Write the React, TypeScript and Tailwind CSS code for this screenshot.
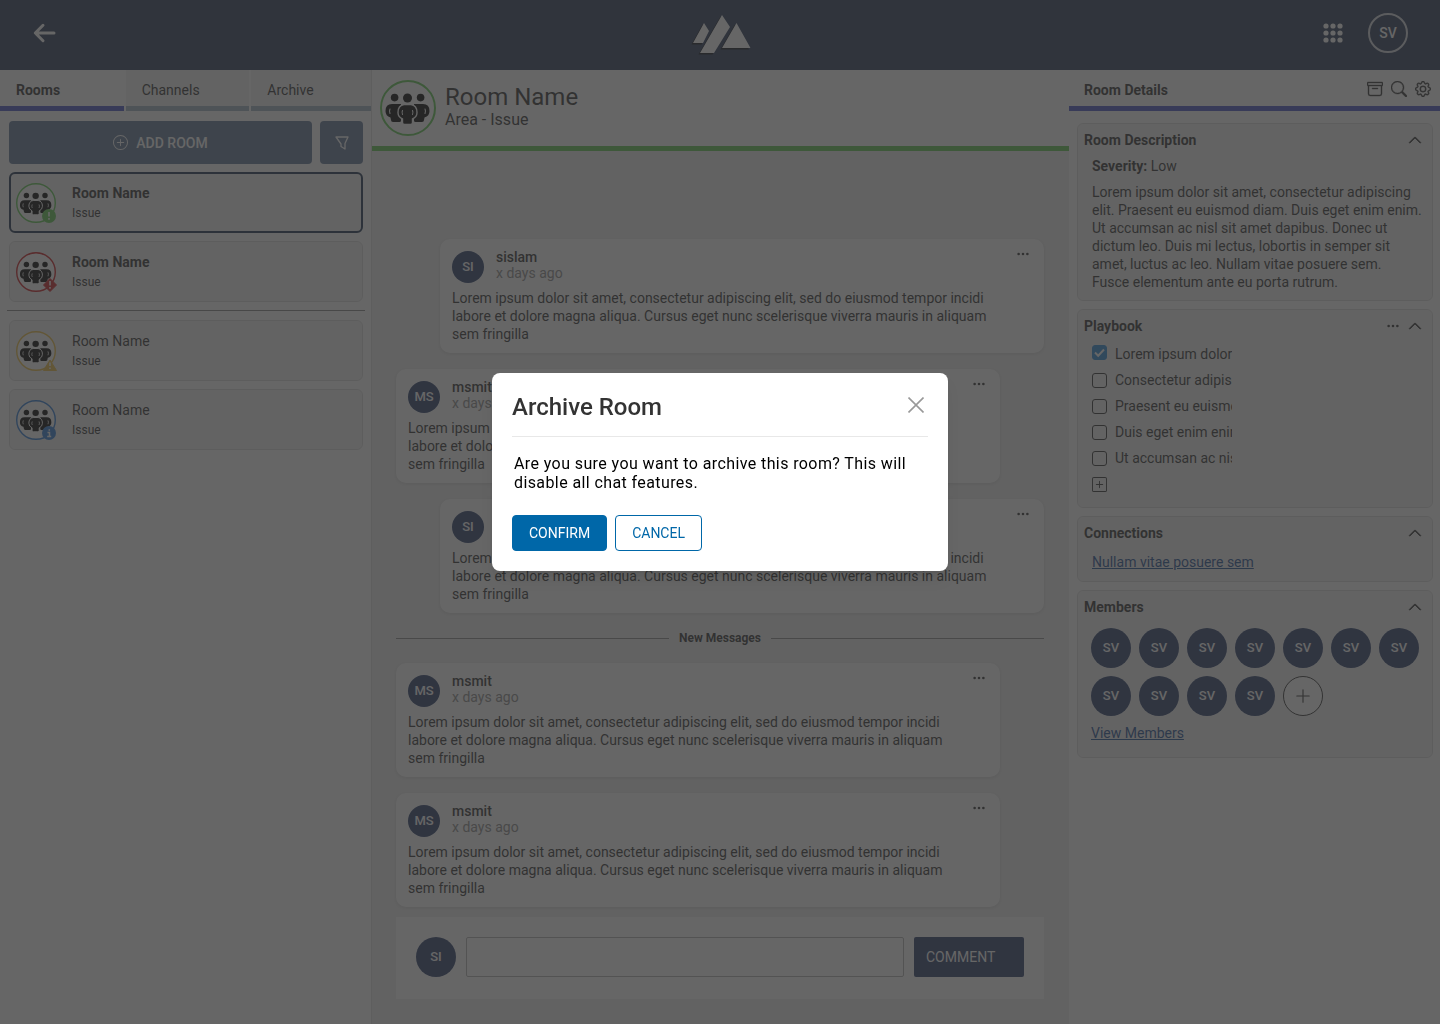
import type { ReactNode } from 'react';
import {
  BsArchive,
  BsChevronUp,
  BsGear,
  BsPlusCircle,
  BsPlusLg,
  BsPlusSquare,
  BsSearch,
  BsThreeDots,
} from 'react-icons/bs';
import clsx from 'clsx';

type Severity = 'low' | 'critical' | 'warning' | 'info';

const severityColor: Record<Severity, string> = {
  low: 'text-[#5fc852]',
  critical: 'text-[#cc1c20]',
  warning: 'text-[#eebf44]',
  info: 'text-[#2f7dd8]',
};

const rooms: { id: number; severity: Severity; unread: boolean; selected: boolean }[] = [
  { id: 1, severity: 'low', unread: true, selected: true },
  { id: 2, severity: 'critical', unread: true, selected: false },
  { id: 3, severity: 'warning', unread: false, selected: false },
  { id: 4, severity: 'info', unread: false, selected: false },
];

const messages = [
  { id: 1, initials: 'SI', user: 'sislam', own: true },
  { id: 2, initials: 'MS', user: 'msmit', own: false },
  { id: 3, initials: 'SI', user: 'sislam', own: true },
];

const newMessages = [
  { id: 4, initials: 'MS', user: 'msmit', own: false },
  { id: 5, initials: 'MS', user: 'msmit', own: false },
];

const messageText =
  'Lorem ipsum dolor sit amet, consectetur adipiscing elit, sed do eiusmod tempor incidi labore et dolore magna aliqua. Cursus eget nunc scelerisque viverra mauris in aliquam sem fringilla';

const playbook = [
  { id: 1, label: 'Lorem ipsum dolor', done: true },
  { id: 2, label: 'Consectetur adipiscing', done: false },
  { id: 3, label: 'Praesent eu euismod', done: false },
  { id: 4, label: 'Duis eget enim enim', done: false },
  { id: 5, label: 'Ut accumsan ac nisl', done: false },
];

const members = Array.from({ length: 11 }, (_, i) => i);

function PeopleIcon({ className }: { className?: string }) {
  return (
    <svg viewBox="0 0 56 56" className={className} aria-hidden="true">
      <circle cx="28" cy="28" r="27" fill="white" stroke="currentColor" strokeWidth="2" />
      <g fill="black">
        <circle cx="14.6" cy="17.6" r="3.8" />
        <circle cx="40.6" cy="17.6" r="3.8" />
        <path d="M12 24h9v16.500q0 1.500-1.500 1.500h-6.500q-2 0-2-2l-.5-2.500q-5-1.500-5-6.500 0-7 6.500-7z" />
        <path d="M43 24h-9v16.500q0 1.500 1.500 1.500h6.500q2 0 2-2l.5-2.500q5-1.500 5-6.500 0-7-6.500-7z" />
        <path
          d="M24 24.500h7q6 1 6 8 0 4.500-4.500 6.500v3.500q0 2-2 2h-6q-2 0-2-2V39Q18 37 18 32.500 18 25.500 24 24.500z"
          stroke="white"
          strokeWidth="1.4"
        />
        <circle cx="27.5" cy="18" r="4.500" />
      </g>
      <g fill="none" stroke="white" strokeWidth="1.1" strokeLinecap="round">
        <path d="M10 29q-1 2 0 4.500M45 29q1 2 0 4.500M22.500 30.500q-1 2 0 4M32.500 30.500q1 2 0 4" />
      </g>
    </svg>
  );
}

function SeverityBadge({ severity }: { severity: Severity }) {
  return (
    <svg
      viewBox="0 0 16 16"
      className={clsx('absolute -right-0.5 -bottom-px size-4', severityColor[severity])}
      aria-hidden="true"
    >
      {severity === 'low' && <circle cx="7" cy="8" r="7" fill="currentColor" />}
      {severity === 'info' && <circle cx="7" cy="8" r="7" fill="currentColor" />}
      {severity === 'critical' && (
        <path d="M8 1.500 14.500 8 8 14.500 1.500 8z" fill="currentColor" stroke="currentColor" strokeLinejoin="round" />
      )}
      {severity === 'warning' && (
        <path d="M8 4 14.500 14.500h-13z" fill="currentColor" stroke="currentColor" strokeLinejoin="round" />
      )}
      {severity === 'info' ? (
        <path d="M7.300 4.200v1.600M5.500 7.400h2V11.400M5.200 11.600h4" stroke="white" strokeWidth="1.500" fill="none" />
      ) : (
        <path
          d={severity === 'low' ? 'M7 4v4.500M7 10v1.800' : severity === 'critical' ? 'M8 4v4.500M8 10v1.800' : 'M8 6.500v3.500M8 11.500v1.600'}
          stroke="white"
          strokeWidth="1.600"
        />
      )}
    </svg>
  );
}

function Avatar({ children, size = 'md' }: { children: ReactNode; size?: 'sm' | 'md' }) {
  return (
    <span
      className={clsx(
        'flex shrink-0 items-center justify-center rounded-full bg-[#283c6a] text-[13px] font-medium text-white',
        size === 'sm' ? 'size-8' : 'size-10'
      )}
    >
      {children}
    </span>
  );
}

function Header() {
  return (
    <header className="grid h-[70px] grid-cols-3 items-center bg-[#283858] px-8 pb-1 text-white">
      <button type="button" aria-label="Back" className="justify-self-start">
        <svg viewBox="0 0 24 24" className="size-6" fill="none" stroke="currentColor" strokeWidth="3" strokeLinecap="round" strokeLinejoin="round">
          <path d="M22 12H3.500M11 4.300 3.300 12l7.700 7.700" />
        </svg>
      </button>
      <svg viewBox="0 0 64 44" className="h-11 w-16 justify-self-center" aria-hidden="true">
        <g fill="black" opacity="0.7" transform="translate(-1.500 1.500)">
          <path d="M16 12l5 8-6 12H5zM34 4l8 12-16 26H12zM48.500 12l14 25H34z" />
        </g>
        <g fill="white">
          <path d="M16 12l5 8-6 12H5zM34 4l8 12-16 26H12zM48.500 12l14 25H34z" />
        </g>
      </svg>
      <div className="flex items-center gap-[25px] justify-self-end">
        <button type="button" aria-label="Apps">
          <svg viewBox="0 0 20 20" className="size-5" fill="currentColor">
            {[3, 10, 17].map((y) => [3, 10, 17].map((x) => <circle key={`${x}-${y}`} cx={x} cy={y} r="2.600" />))}
          </svg>
        </button>
        <button type="button" className="flex size-10 items-center justify-center rounded-full border-2 border-white/80 text-sm font-medium">
          SV
        </button>
      </div>
    </header>
  );
}

function RoomCard({ room }: { room: (typeof rooms)[number] }) {
  return (
    <button
      type="button"
      className={clsx(
        'flex h-[61px] w-full items-center gap-4 rounded-md bg-[#f4f4f4] text-left',
        room.selected ? 'border-2 border-[#1c3350] pl-[5px]' : 'border border-[#dcdcdc] pl-1.5'
      )}
    >
      <span className="relative size-10 shrink-0">
        <PeopleIcon className={clsx('size-10', severityColor[room.severity])} />
        <SeverityBadge severity={room.severity} />
      </span>
      <span className="flex flex-col">
        <span className={clsx('text-sm leading-5', room.unread && 'font-bold')}>Room Name</span>
        <span className="text-xs leading-5">Issue</span>
      </span>
    </button>
  );
}

function RoomList() {
  return (
    <aside className="w-[372px] shrink-0 border-r border-[#e0e0e0] bg-white">
      <nav className="flex h-[41px] gap-0.5 text-sm">
        <a href="#rooms" className="w-1/3 shrink-0 border-b-5 border-[#4a55c8] bg-white px-4 leading-10 font-bold">
          Rooms
        </a>
        <a href="#channels" className="w-1/3 shrink-0 border-b-5 border-[#a0b2c2] bg-[#f2f2f2] px-4 leading-10">
          Channels
        </a>
        <a href="#archive" className="flex-1 border-b-5 border-[#a0b2c2] bg-[#f2f2f2] px-4 leading-10">
          Archive
        </a>
      </nav>
      <div className="flex flex-col gap-2 pt-2.5 pr-2 pl-[9px]">
        <div className="flex h-[43px] gap-2 text-white">
          <button type="button" className="flex flex-1 items-center justify-center gap-2 rounded-sm bg-[#607898] text-sm font-medium">
            <BsPlusCircle className="size-[15px]" />
            ADD ROOM
          </button>
          <button type="button" aria-label="Filter rooms" className="flex w-[43px] items-center justify-center rounded-sm bg-[#607898]">
            <svg viewBox="0 0 14 14" className="size-3.5" fill="none" stroke="currentColor" strokeLinejoin="round" strokeWidth="1.300">
              <path d="M1 1h12L10 7.500V13L6 10.500V8z" />
            </svg>
          </button>
        </div>
        {rooms.slice(0, 2).map((room) => (
          <RoomCard key={room.id} room={room} />
        ))}
        <hr className="-mx-0.5 mb-px border-[#888]" />
        {rooms.slice(2).map((room) => (
          <RoomCard key={room.id} room={room} />
        ))}
      </div>
    </aside>
  );
}

function Message({ message }: { message: (typeof messages)[number] }) {
  return (
    <article
      className={clsx(
        'rounded-[10px] bg-white px-3 pt-3 pb-2.5 text-sm shadow-[0_1px_4px_rgba(0,0,0,0.12)]',
        message.own ? 'ml-11' : 'mr-11'
      )}
    >
      <div className="flex items-start gap-3">
        <Avatar size="sm">{message.initials}</Avatar>
        <div className="flex-1 leading-4">
          <p className="-mt-0.5 font-medium">{message.user}</p>
          <p className="text-[#8c8c8c]">x days ago</p>
        </div>
        <button type="button" aria-label="Message options" className="-mt-1 mr-0.5">
          <BsThreeDots className="size-3.5" />
        </button>
      </div>
      <p className="mt-1.5 pr-9 leading-[18px]">{messageText}</p>
    </article>
  );
}

function Chat() {
  return (
    <main className="flex min-w-0 flex-1 flex-col bg-[#f0f0f0]">
      <div className="flex h-[81px] items-center gap-2 border-b-5 border-[#5fc852] bg-white px-2">
        <PeopleIcon className={clsx('size-14', severityColor.low)} />
        <div className="pb-1 pl-px">
          <h1 className="text-2xl leading-7">Room Name</h1>
          <p className="text-base leading-[18px]">Area - Issue</p>
        </div>
      </div>
      <div className="flex flex-1 flex-col justify-end pr-[25px] pb-[25px] pl-6">
        <div className="flex flex-col gap-4">
          {messages.map((message) => (
            <Message key={message.id} message={message} />
          ))}
        </div>
        <div className="flex h-[50px] items-center gap-2.5 text-xs font-bold">
          <hr className="flex-1 border-[#8c8c8c]" />
          New Messages
          <hr className="flex-1 border-[#8c8c8c]" />
        </div>
        <div className="flex flex-col gap-4">
          {newMessages.map((message) => (
            <Message key={message.id} message={message} />
          ))}
        </div>
        <form className="mt-2.5 flex items-center gap-2.5 bg-white px-5 pt-5 pb-[22px]">
          <Avatar>SI</Avatar>
          <input
            type="text"
            aria-label="Comment"
            className="h-10 min-w-0 flex-1 rounded-xs border border-[#b4b4b4] bg-white px-3 text-sm"
          />
          <button type="button" className="h-10 w-[110px] rounded-xs bg-[#283c6a] px-3 text-left text-sm text-white">
            COMMENT
          </button>
        </form>
      </div>
    </main>
  );
}

function Panel({ title, extra, className, children }: { title: string; extra?: ReactNode; className?: string; children: ReactNode }) {
  return (
    <section className={clsx('rounded-md border border-[#dcdcdc] bg-[#f4f4f4] pt-[7px]', className)}>
      <div className="flex items-center justify-between pr-2.5 pl-1.5">
        <h3 className="text-sm leading-[18px] font-bold">{title}</h3>
        <div className="flex items-center gap-2">
          {extra}
          <button type="button" aria-label={`Collapse ${title}`}>
            <BsChevronUp className="size-3.5 stroke-1" />
          </button>
        </div>
      </div>
      {children}
    </section>
  );
}

function RoomDetails() {
  return (
    <aside className="w-[371px] shrink-0 bg-white text-sm">
      <div className="flex h-[41px] items-start justify-between border-b-5 border-[#4a55c8] pr-[9px] pl-[15px]">
        <h2 className="leading-10 font-bold">Room Details</h2>
        <div className="flex gap-2 pt-[11px]">
          <button type="button" aria-label="Archive room">
            <BsArchive className="size-4 stroke-[0.4]" />
          </button>
          <button type="button" aria-label="Search room">
            <BsSearch className="size-4 stroke-[0.4]" />
          </button>
          <button type="button" aria-label="Room settings">
            <BsGear className="size-4 stroke-[0.4]" />
          </button>
        </div>
      </div>
      <div className="flex flex-col gap-2 pt-3 pr-[7px] pl-2">
        <Panel title="Room Description" className="pb-[9px]">
          <div className="mt-2 pr-1 pl-3.5 leading-[18px]">
            <p>
              <strong>Severity:</strong> Low
            </p>
            <p className="mt-2">
              Lorem ipsum dolor sit amet, consectetur adipiscing elit. Praesent eu euismod diam. Duis eget enim enim. Ut
              accumsan ac nisl sit amet dapibus. Donec ut dictum leo. Duis mi lectus, lobortis in semper sit amet, luctus
              ac leo. Nullam vitae posuere sem.
              <br />
              Fusce elementum ante eu porta rutrum.
            </p>
          </div>
        </Panel>
        <Panel
          title="Playbook"
          className="pb-3.5"
          extra={
            <button type="button" aria-label="Playbook options">
              <BsThreeDots className="size-3.5" />
            </button>
          }
        >
          <div className="mt-2.5 flex flex-col gap-2 pl-3.5 leading-[18px]">
            {playbook.map((item) => (
              <label key={item.id} className="flex items-center gap-2">
                <input
                  type="checkbox"
                  defaultChecked={item.done}
                  className="peer size-[15px] appearance-none rounded-[3px] border border-[#333] checked:self-start checked:border-[#2f8bd8] checked:bg-[#2f8bd8]"
                />
                <svg viewBox="0 0 15 15" className="absolute hidden size-[15px] self-start peer-checked:block" fill="none" stroke="white" strokeWidth="2" aria-hidden="true">
                  <path d="M3 7.500 6.200 10.700 12 4.500" />
                </svg>
                <span className="w-[117px] overflow-hidden whitespace-nowrap">{item.label}</span>
              </label>
            ))}
            <button type="button" aria-label="Add playbook item" className="flex h-[18px] items-center">
              <BsPlusSquare className="size-[15px]" />
            </button>
          </div>
        </Panel>
        <Panel title="Connections" className="pb-[9px]">
          <a href="#connection" className="mt-[11px] ml-3.5 inline-block leading-[18px] text-[#1f4f94] underline">
            Nullam vitae posuere sem
          </a>
        </Panel>
        <Panel title="Members" className="pb-3.5">
          <div className="mt-3 flex flex-wrap gap-2 pl-[13px]">
            {members.map((member) => (
              <Avatar key={member}>SV</Avatar>
            ))}
            <button type="button" aria-label="Add member" className="flex size-10 items-center justify-center rounded-full border border-[#333] bg-white">
              <BsPlusLg className="size-[18px]" />
            </button>
          </div>
          <a href="#members" className="mt-2 ml-[13px] inline-block leading-[18px] text-[#1f4f94] underline">
            View Members
          </a>
        </Panel>
      </div>
    </aside>
  );
}

function ArchiveDialog() {
  return (
    <div className="fixed inset-0 flex items-start justify-center bg-[#333]/75 pt-[373px]">
      <div
        role="dialog"
        aria-modal="true"
        aria-labelledby="archive-title"
        className="w-[456px] rounded-lg bg-white p-5 shadow-lg"
      >
        <div className="flex items-start justify-between border-b border-[#e8e8e8] pb-[15px]">
          <h2 id="archive-title" className="text-2xl leading-7 font-medium">
            Archive Room
          </h2>
          <button type="button" aria-label="Close" className="mt-1 mr-1">
            <svg viewBox="0 0 16 16" className="size-4" fill="none" stroke="#999" strokeWidth="1.600">
              <path d="M.5.5l15 15M15.500.5l-15 15" />
            </svg>
          </button>
        </div>
        <p className="mt-[17px] px-0.5 text-base leading-[19px] tracking-wide text-black">
          Are you sure you want to archive this room? This will disable all chat features.
        </p>
        <div className="mt-[23px] flex gap-2 text-sm">
          <button type="button" className="h-9 rounded-sm border border-[#0067a8] bg-[#0067a8] px-4 text-white">
            CONFIRM
          </button>
          <button type="button" className="h-9 rounded-sm border border-[#0067a8] bg-white px-4 text-[#0067a8]">
            CANCEL
          </button>
        </div>
      </div>
    </div>
  );
}

export default function App() {
  return (
    <div className="flex min-h-screen flex-col font-[Roboto,sans-serif] text-[#333]">
      <Header />
      <div className="flex flex-1">
        <RoomList />
        <Chat />
        <RoomDetails />
      </div>
      <ArchiveDialog />
    </div>
  );
}
